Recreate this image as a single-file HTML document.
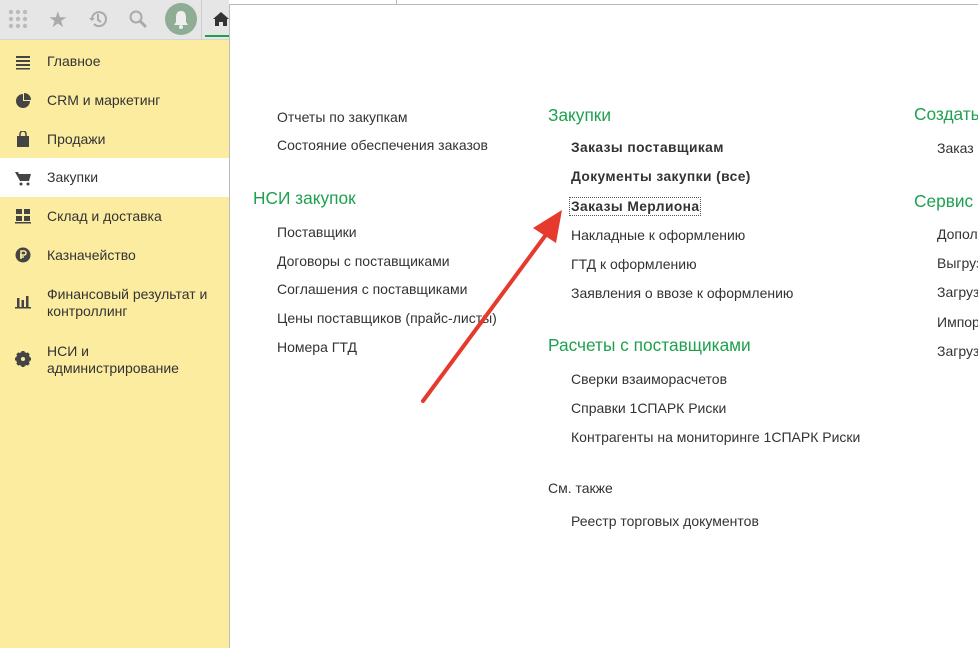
<!DOCTYPE html>
<html><head><meta charset="utf-8"><style>
*{margin:0;padding:0;box-sizing:border-box}
body{width:978px;height:648px;overflow:hidden;position:relative;background:#fff;font-family:"Liberation Sans",Arial,sans-serif;font-size:14px;color:#333}
#wrap{position:absolute;left:0;top:0;width:978px;height:648px;overflow:hidden}
.top{position:absolute;left:0;top:0;width:229px;height:40px;background:#e6e6e6;border-bottom:1px solid #d4d4d4}
.side{position:absolute;left:0;top:40px;width:230px;height:608px;background:#fbeca0;border-right:1px solid #bbb}
.sel{position:absolute;left:0;top:118px;width:229px;height:39px;background:#fff}
.t{position:absolute;white-space:nowrap;line-height:16px}
.g{color:#1ea14e;font-size:17.3px;line-height:20px}
.b{font-weight:bold;font-size:13.8px;letter-spacing:0.4px}
.panel{position:absolute;left:229px;top:4px;width:749px;height:644px;border-top:1px solid #bbb;border-left:1px solid #bbb;background:#fff}
.ic{position:absolute;left:15px;width:16px;height:16px}
</style></head><body><div id="wrap">
<div class="top">
<svg style="position:absolute;left:8px;top:9px" width="20" height="20"><g fill="#bbb"><circle cx="3" cy="3" r="2.2"/><circle cx="10" cy="3" r="2.2"/><circle cx="17" cy="3" r="2.2"/><circle cx="3" cy="10" r="2.2"/><circle cx="10" cy="10" r="2.2"/><circle cx="17" cy="10" r="2.2"/><circle cx="3" cy="17" r="2.2"/><circle cx="10" cy="17" r="2.2"/><circle cx="17" cy="17" r="2.2"/></g></svg>
<div style="position:absolute;left:48px;top:7px;font-size:22px;color:#aaa">★</div>
<svg style="position:absolute;left:88px;top:9px" width="20" height="20"><path d="M4 10a7 7 0 1 1 2 5" fill="none" stroke="#aaa" stroke-width="2"/><path d="M1 9l3 3 3-3" fill="#aaa"/><path d="M10 5v6l3 2" fill="none" stroke="#aaa" stroke-width="2"/></svg>
<svg style="position:absolute;left:128px;top:9px" width="20" height="20"><circle cx="8" cy="8" r="5.5" fill="none" stroke="#aaa" stroke-width="2"/><path d="M12 12l6 6" stroke="#aaa" stroke-width="3"/></svg>
<div style="position:absolute;left:165px;top:3px;width:32px;height:32px;border-radius:50%;background:#8fac94"></div>
<svg style="position:absolute;left:172px;top:9px" width="18" height="20"><path d="M9 2c-4 0-5 3-5 7v4l-2 3h14l-2-3V9c0-4-1-7-5-7z" fill="#eee"/><circle cx="9" cy="18" r="2" fill="#eee"/></svg>
<div style="position:absolute;left:201px;top:0;width:1px;height:40px;background:#ccc"></div>
<svg style="position:absolute;left:213px;top:12px" width="16" height="14"><path d="M8 0l8 7h-2v7h-4v-4H6v4H2V7H0z" fill="#333"/></svg>
<div style="position:absolute;left:205px;top:35px;width:24px;height:2px;background:#1ea14e"></div>
</div>
<div class="side">
<div class="sel"></div>
</div>
<svg class="ic" style="top:54px" viewBox="0 0 16 16"><g fill="#444"><rect x="1" y="2" width="14" height="2"/><rect x="1" y="6" width="14" height="2"/><rect x="1" y="10" width="14" height="2"/><rect x="1" y="14" width="14" height="1.5"/></g></svg>
<svg class="ic" style="top:93px" viewBox="0 0 16 16"><path d="M8 8V1a7 7 0 1 0 7 7z" fill="#444"/><path d="M9 0v7h7a7 7 0 0 0-7-7z" fill="#444"/></svg>
<svg class="ic" style="top:131px" viewBox="0 0 16 16"><path d="M2 5h12v11H2z" fill="#444"/><path d="M5 6V3a3 3 0 0 1 6 0v3" fill="none" stroke="#444" stroke-width="1.5"/></svg>
<svg class="ic" style="top:170px" viewBox="0 0 16 16"><path d="M0 2h3l1 2h12l-2 7H5z" fill="#444"/><circle cx="6" cy="14" r="1.5" fill="#444"/><circle cx="13" cy="14" r="1.5" fill="#444"/></svg>
<svg class="ic" style="top:208px" viewBox="0 0 16 16"><g fill="#444"><rect x="1" y="1" width="6" height="5"/><rect x="9" y="1" width="6" height="5"/><rect x="1" y="8" width="6" height="5"/><rect x="9" y="8" width="6" height="5"/><rect x="0" y="14" width="16" height="1.5"/></g></svg>
<svg class="ic" style="top:247px" viewBox="0 0 16 16"><circle cx="8" cy="8" r="7.5" fill="#444"/><path d="M6 12V4h3a2 2 0 0 1 0 4H5M5 10h4" fill="none" stroke="#fbeca0" stroke-width="1.5"/></svg>
<svg class="ic" style="top:294px" viewBox="0 0 16 16"><g fill="#444"><rect x="2" y="4" width="2.5" height="9"/><rect x="6.5" y="6" width="2.5" height="7"/><rect x="11" y="2" width="2.5" height="11"/><rect x="0" y="13" width="16" height="1.5"/></g></svg>
<svg class="ic" style="top:351px" viewBox="0 0 16 16"><circle cx="8" cy="8" r="5.5" fill="none" stroke="#444" stroke-width="3"/><g stroke="#444" stroke-width="3"><path d="M8 0v16M0 8h16M2.3 2.3l11.4 11.4M13.7 2.3L2.3 13.7"/></g><circle cx="8" cy="8" r="2" fill="#fbeca0"/></svg>
<div class="t" style="left:47px;top:53px">Главное</div>
<div class="t" style="left:47px;top:92px">CRM и маркетинг</div>
<div class="t" style="left:47px;top:131px">Продажи</div>
<div class="t" style="left:47px;top:169px">Закупки</div>
<div class="t" style="left:47px;top:208px">Склад и доставка</div>
<div class="t" style="left:47px;top:247px">Казначейство</div>
<div class="t" style="left:47px;top:286px;line-height:17px">Финансовый результат и<br>контроллинг</div>
<div class="t" style="left:47px;top:343px;line-height:17px">НСИ и<br>администрирование</div>
<div class="panel"><div style="position:absolute;left:166px;top:-5px;width:1px;height:5px;background:#bbb"></div></div>
<div class="t" style="left:277px;top:109px">Отчеты по закупкам</div>
<div class="t" style="left:277px;top:137px">Состояние обеспечения заказов</div>
<div class="t g" style="left:253px;top:188px">НСИ закупок</div>
<div class="t" style="left:277px;top:224px">Поставщики</div>
<div class="t" style="left:277px;top:253px">Договоры с поставщиками</div>
<div class="t" style="left:277px;top:281px">Соглашения с поставщиками</div>
<div class="t" style="left:277px;top:310px">Цены поставщиков (прайс-листы)</div>
<div class="t" style="left:277px;top:339px">Номера ГТД</div>
<div class="t g" style="left:548px;top:105px">Закупки</div>
<div class="t b" style="left:571px;top:140px">Заказы поставщикам</div>
<div class="t b" style="left:571px;top:169px">Документы закупки (все)</div>
<div class="t b" style="left:569px;top:197px;border:1px dotted #555;padding:0 1px;line-height:17px">Заказы Мерлиона</div>
<div class="t" style="left:571px;top:227px">Накладные к оформлению</div>
<div class="t" style="left:571px;top:256px">ГТД к оформлению</div>
<div class="t" style="left:571px;top:285px">Заявления о ввозе к оформлению</div>
<div class="t g" style="left:548px;top:335px">Расчеты с поставщиками</div>
<div class="t" style="left:571px;top:371px">Сверки взаиморасчетов</div>
<div class="t" style="left:571px;top:400px">Справки 1СПАРК Риски</div>
<div class="t" style="left:571px;top:429px">Контрагенты на мониторинге 1СПАРК Риски</div>
<div class="t" style="left:548px;top:480px">См. также</div>
<div class="t" style="left:571px;top:513px">Реестр торговых документов</div>
<div class="t g" style="left:914px;top:104px">Создать</div>
<div class="t" style="left:937px;top:140px">Заказ</div>
<div class="t g" style="left:914px;top:191px">Сервис</div>
<div class="t" style="left:937px;top:226px">Дополнительно</div>
<div class="t" style="left:937px;top:255px">Выгрузка</div>
<div class="t" style="left:937px;top:284px">Загрузка</div>
<div class="t" style="left:937px;top:314px">Импорт</div>
<div class="t" style="left:937px;top:343px">Загрузка</div>
<svg style="position:absolute;left:0;top:0" width="978" height="648"><path d="M423 401L548 232" stroke="#e53a2d" stroke-width="4" stroke-linecap="round"/><path d="M562 210L533 228L556 243z" fill="#e53a2d"/></svg>
</div></body></html>
